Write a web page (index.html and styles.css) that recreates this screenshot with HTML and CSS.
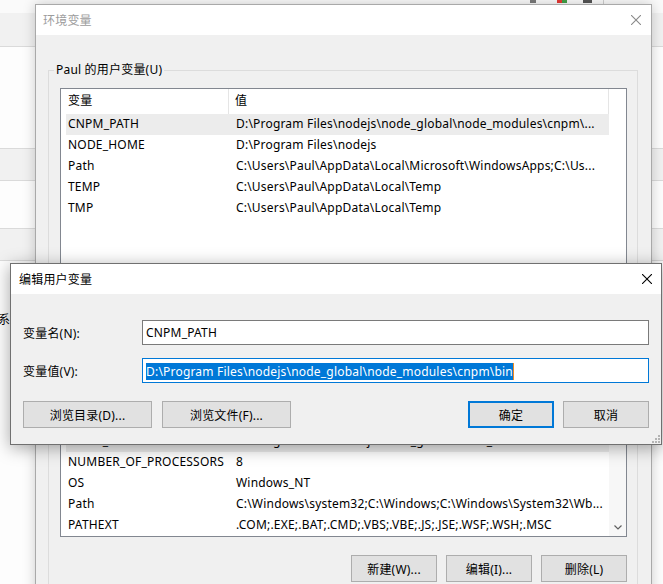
FILE: index.html
```html
<!DOCTYPE html>
<html lang="zh-CN">
<head>
    <meta charset="UTF-8">
    <title>环境变量</title>
    <link rel="stylesheet" href="styles.css">
</head>
<body>
<div class="desk">

    <!-- ventana de fondo -->
    <div class="back-window">
        <div class="strip strip-top">
            <span class="tray tray-a"></span>
            <span class="tray tray-r"></span>
            <span class="tray tray-g"></span>
            <span class="tray tray-b"></span>
            <span class="tray-sep"></span>
        </div>
        <div class="strip strip-gray strip-2"></div>
        <div class="strip strip-white strip-3"></div>
        <div class="strip strip-gray strip-4"></div>
        <div class="strip strip-white strip-5"></div>
        <div class="strip strip-gray strip-6"></div>
        <div class="strip strip-white strip-last"><span class="peek">系统</span></div>
    </div>

    <!-- 环境变量 -->
    <div class="window env-window">
        <div class="titlebar">
            <span class="title inactive">环境变量</span>
            <svg class="close" width="10" height="10" viewBox="0 0 10 10"><path d="M0 0L10 10M10 0L0 10" stroke="#8a8a8a" stroke-width="1.1"/></svg>
        </div>
        <div class="env-body">
            <fieldset class="group user-group">
                <legend>Paul 的用户变量(U)</legend>
                <div class="list user-list">
                    <div class="list-main">
                        <div class="list-head"><span class="col-name">变量</span><span class="col-value">值</span></div>
                        <div class="row selected"><span class="cell-name">CNPM_PATH</span><span class="cell-value">D:\Program Files\nodejs\node_global\node_modules\cnpm\...</span></div>
                        <div class="row"><span class="cell-name">NODE_HOME</span><span class="cell-value">D:\Program Files\nodejs</span></div>
                        <div class="row"><span class="cell-name">Path</span><span class="cell-value">C:\Users\Paul\AppData\Local\Microsoft\WindowsApps;C:\Us...</span></div>
                        <div class="row"><span class="cell-name">TEMP</span><span class="cell-value">C:\Users\Paul\AppData\Local\Temp</span></div>
                        <div class="row"><span class="cell-name">TMP</span><span class="cell-value">C:\Users\Paul\AppData\Local\Temp</span></div>
                    </div>
                    <div class="list-side"></div>
                </div>
                <div class="button-row">
                    <button class="btn">新建(N)...</button>
                    <button class="btn">编辑(E)...</button>
                    <button class="btn">删除(D)</button>
                </div>
            </fieldset>

            <fieldset class="group system-group">
                <legend>系统变量(S)</legend>
                <div class="list system-list">
                    <div class="list-main">
                        <div class="list-head"><span class="col-name">变量</span><span class="col-value">值</span></div>
                        <div class="row"><span class="cell-name">ComSpec</span><span class="cell-value">C:\Windows\system32\cmd.exe</span></div>
                        <div class="row"><span class="cell-name">DriverData</span><span class="cell-value">C:\Windows\System32\Drivers\DriverData</span></div>
                        <div class="row selected"><span class="cell-name">NODE_PATH</span><span class="cell-value">D:\Program Files\nodejs\node_global\node_modules</span></div>
                        <div class="row"><span class="cell-name">NUMBER_OF_PROCESSORS</span><span class="cell-value">8</span></div>
                        <div class="row"><span class="cell-name">OS</span><span class="cell-value">Windows_NT</span></div>
                        <div class="row"><span class="cell-name">Path</span><span class="cell-value">C:\Windows\system32;C:\Windows;C:\Windows\System32\Wb...</span></div>
                        <div class="row"><span class="cell-name">PATHEXT</span><span class="cell-value">.COM;.EXE;.BAT;.CMD;.VBS;.VBE;.JS;.JSE;.WSF;.WSH;.MSC</span></div>
                    </div>
                    <div class="list-side scrollbar">
                        <svg width="8" height="5" viewBox="0 0 8 5"><path d="M0.5 0.5L4 4L7.5 0.5" stroke="#606060" stroke-width="1.2" fill="none"/></svg>
                    </div>
                </div>
                <div class="button-row">
                    <button class="btn">新建(W)...</button>
                    <button class="btn">编辑(I)...</button>
                    <button class="btn">删除(L)</button>
                </div>
            </fieldset>
        </div>
    </div>

    <!-- 编辑用户变量 -->
    <div class="window edit-window">
        <div class="titlebar">
            <span class="title">编辑用户变量</span>
            <svg class="close" width="10" height="10" viewBox="0 0 10 10"><path d="M0 0L10 10M10 0L0 10" stroke="#000" stroke-width="1.1"/></svg>
        </div>
        <div class="edit-body">
            <div class="form">
                <label>变量名(N):</label>
                <div class="textbox">CNPM_PATH</div>
                <label>变量值(V):</label>
                <div class="textbox focused"><span class="sel">D:\Program Files\nodejs\node_global\node_modules\cnpm\bin</span></div>
            </div>
            <div class="edit-buttons">
                <div class="btn-group">
                    <button class="btn wide">浏览目录(D)...</button>
                    <button class="btn wide">浏览文件(F)...</button>
                </div>
                <div class="btn-group">
                    <button class="btn default">确定</button>
                    <button class="btn">取消</button>
                </div>
            </div>
        </div>
        <svg class="grip" width="9" height="9" viewBox="0 0 9 9">
            <rect x="7" y="1" width="2" height="2" fill="#b4b4b4"/>
            <rect x="4" y="4" width="2" height="2" fill="#b4b4b4"/>
            <rect x="7" y="4" width="2" height="2" fill="#b4b4b4"/>
            <rect x="1" y="7" width="2" height="2" fill="#b4b4b4"/>
            <rect x="4" y="7" width="2" height="2" fill="#b4b4b4"/>
            <rect x="7" y="7" width="2" height="2" fill="#b4b4b4"/>
        </svg>
    </div>

</div>
</body>
</html>
```

FILE: styles.css
```css
* {
    box-sizing: border-box;
}

body {
    margin: 0;
    font-family: "Noto Sans", "Noto Sans CJK SC", sans-serif;
    font-size: 12px;
    letter-spacing: 0.2px;
    color: #000;
}

.desk {
    position: relative;
    width: 663px;
    height: 584px;
    overflow: hidden;
    background: #fff;
}

/* ventana de fondo */
.back-window {
    display: flex;
    flex-direction: column;
    height: 100%;
}

.strip {
    flex: none;
    border-bottom: 1px solid #dadada;
}

.strip-gray {
    background: #f1f1f1;
}

.strip-white {
    background: #fdfdfd;
}

.strip-top {
    height: 13px;
    background: #fafafa;
    display: flex;
    align-items: flex-start;
    border-bottom: none;
}

.strip-2 { height: 34px; }
.strip-3 { height: 102px; }
.strip-4 { height: 32px; }
.strip-5 { height: 48px; }
.strip-6 { height: 32px; }

.strip-last {
    flex: 1;
    border-bottom: none;
    padding-top: 50px;
}

.peek {
    margin-left: -2px;
    line-height: 16px;
}

.tray {
    height: 3px;
}

.tray-a { margin-left: 530px; width: 6px; background: #7a7a7a; }
.tray-r { margin-left: 21px; width: 5px; background: #e53935; }
.tray-g { width: 5px; background: #43a047; }
.tray-b { margin-left: 16px; width: 9px; background: #555; }

.tray-sep {
    margin-left: 11px;
    width: 1px;
    height: 12px;
    background: #cfcfcf;
}

/* ventanas */
.window {
    position: absolute;
    background: #f0f0f0;
}

.env-window {
    left: 35px;
    top: 4px;
    width: 617px;
    height: 620px;
    border: 1px solid #a9a9a9;
    box-shadow: 0 0 12px rgba(0, 0, 0, 0.2);
}

.edit-window {
    left: 10px;
    top: 263px;
    width: 652px;
    height: 182px;
    border: 1px solid #707070;
    box-shadow: 0 3px 16px rgba(0, 0, 0, 0.35);
}

.titlebar {
    height: 30px;
    background: #fff;
    display: flex;
    align-items: center;
    justify-content: space-between;
}

.env-window .titlebar {
    padding: 0 10px 0 7px;
}

.edit-window .titlebar {
    padding: 0 9px 0 8px;
}

.title.inactive {
    color: #9c9c9c;
}

.close {
    display: block;
}

/* cuerpo 环境变量 */
.env-body {
    padding: 27px 13px 0 12px;
}

.group {
    margin: 0;
    min-width: 0;
    border: 1px solid #dcdcdc;
    padding: 10px 10px 14px 11px;
}

.group + .group {
    margin-top: 7px;
}

.group legend {
    margin-left: -6px;
    padding: 0 2px;
    line-height: 16px;
}

.list {
    display: flex;
    background: #fff;
    border: 1px solid #828790;
    overflow: hidden;
}

.user-list {
    height: 190px;
}

.system-list {
    height: 174px;
}

.list-main {
    width: 548px;
    overflow: hidden;
}

.list-side {
    flex: 1;
}

.scrollbar {
    background: #f7f7f7;
    display: flex;
    align-items: flex-end;
    justify-content: center;
    padding-bottom: 6px;
}

.list-head {
    display: flex;
    height: 25px;
    line-height: 24px;
}

.col-name {
    width: 168px;
    padding-left: 7px;
    border-right: 1px solid #e5e5e5;
}

.col-value {
    flex: 1;
    padding-left: 6px;
    border-right: 1px solid #e5e5e5;
}

.row {
    display: flex;
    height: 21px;
    line-height: 20px;
    margin-left: 5px;
    white-space: nowrap;
}

.row.selected {
    background: #ececec;
}

.cell-name {
    width: 163px;
    padding-left: 2px;
    overflow: hidden;
}

.cell-value {
    flex: 1;
    padding-left: 7px;
    overflow: hidden;
}

.button-row {
    display: flex;
    justify-content: flex-end;
    gap: 9px;
    margin-top: 18px;
}

.user-group .button-row {
    margin-top: 10px;
}

.btn {
    width: 86px;
    height: 27px;
    padding: 0;
    background: #e1e1e1;
    border: 1px solid #adadad;
    font: inherit;
    letter-spacing: inherit;
    color: #000;
}

.btn.wide {
    width: 129px;
}

.btn.default {
    border: 2px solid #0078d7;
}

/* cuerpo 编辑用户变量 */
.edit-body {
    padding: 26px 12px 0 12px;
}

.form {
    display: grid;
    grid-template-columns: 119px 1fr;
    row-gap: 13px;
    align-items: center;
}

.textbox {
    height: 25px;
    padding: 0 3px;
    line-height: 23px;
    background: #fff;
    border: 1px solid #7a7a7a;
    white-space: nowrap;
    overflow: hidden;
}

.textbox.focused {
    border-color: #0078d7;
}

.sel {
    display: inline-block;
    vertical-align: middle;
    line-height: 17px;
    background: #0078d7;
    color: #fff;
    border-right: 1px solid #f08a1c;
}

.edit-buttons {
    display: flex;
    justify-content: space-between;
    margin-top: 18px;
}

.btn-group {
    display: flex;
    gap: 10px;
}

.btn-group:last-child {
    gap: 9px;
}

.grip {
    position: absolute;
    right: 1px;
    bottom: 1px;
}
```
